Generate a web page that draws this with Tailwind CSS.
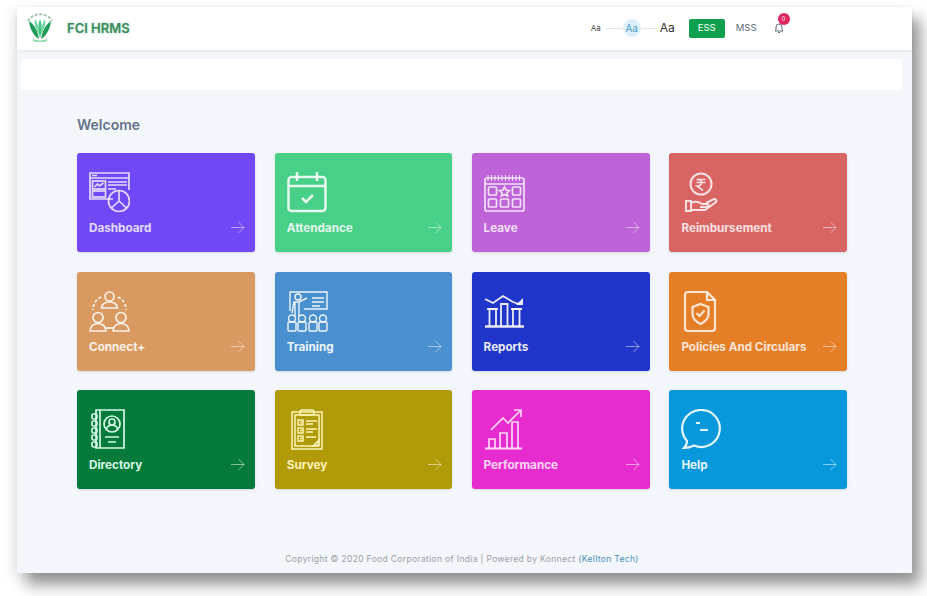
<!DOCTYPE html>
<html lang="en">
<head>
<meta charset="utf-8">
<title>FCI HRMS</title>
<script src="https://cdn.jsdelivr.net/npm/@tailwindcss/browser@4"></script>
</head>
<body class="bg-white font-['Inter',sans-serif] overflow-hidden">
<div class="w-[927px] h-[596px] pt-[7px] pl-[17px]">
  <div class="w-[895px] h-[566px] bg-[#f3f6fa] flex flex-col shadow-[9px_12px_14px_rgba(0,0,0,0.4),-6px_4px_12px_rgba(0,0,0,0.07)]">
    <header class="h-[43px] shrink-0 bg-white shadow-[0_1px_4px_rgba(0,0,0,0.08)] flex items-center">
      <svg class="ml-[8px] w-[30px] h-[32px] -mt-[5px]" viewBox="0 0 30 32" fill="none">
        <path d="M3 11a14 14 0 0 1 24 0" stroke="#a9c9b2" stroke-width="2" stroke-dasharray="3 1.500"/>
        <path d="M4 11c1 9 5 15 10 18-1-7-4-14-10-18z" fill="#1f9a58"/>
        <path d="M26 11c-1 9-5 15-10 18 1-7 4-14 10-18z" fill="#1f9a58"/>
        <path d="M15 9c-2 5-2 12 0 19 2-7 2-14 0-19z" fill="#3cc37a"/>
        <path d="M10 9c-1 5 1 11 4 15 0-5-1-11-4-15zM20 9c1 5-1 11-4 15 0-5 1-11 4-15z" fill="#6ad99b"/>
        <path d="M8 30c5 2 9 2 14 0" stroke="#8fdcae" stroke-width="2"/>
      </svg>
      <span class="ml-[12px] text-[13px] leading-none font-semibold text-[#3f8a60] [text-shadow:0_0_2px_rgba(64,190,110,0.6)] -mt-[1px]">FCI HRMS</span>
      <div class="ml-[461px] flex items-center -mt-[1px]">
        <span class="text-[8px] text-[#444]">Aa</span>
        <span class="ml-[5px] w-[17px] h-px bg-[#e3e6ea]"></span>
        <span class="w-[18px] h-[18px] rounded-full bg-[#e0f0fa] text-[10px] text-[#4a9cc4] flex items-center justify-center">Aa</span>
        <span class="w-[16px] h-px bg-[#e3e6ea]"></span>
        <span class="ml-[3px] text-[12px] text-[#333]">Aa</span>
        <span class="ml-[14px] w-[36px] h-[19px] rounded-[2px] bg-[#0fa04f] text-[9.5px] text-white flex items-center justify-center">ESS</span>
        <span class="ml-[11px] text-[9.5px] text-[#5d6b78]">MSS</span>
        <div class="relative ml-[17px] w-[10px] h-[12px]">
          <svg class="w-[10px] h-[12px]" viewBox="0 0 10 12" fill="none" stroke="#5d6b78" stroke-width="1"><path d="M2 8V5a3 3 0 0 1 6 0v3l1 1H1z"/><path d="M4 10.500h2"/></svg>
          <span class="absolute -top-[9px] left-[4px] w-[12px] h-[12px] rounded-full bg-[#e0275f] text-[5.5px] text-white flex items-center justify-center">0</span>
        </div>
      </div>
    </header>
    <div class="mt-[9px] ml-[4px] w-[881px] h-[31px] shrink-0 bg-white"></div>
    <main class="pl-[60px] pt-[26px] flex-1 flex flex-col">
      <h1 class="text-[14px] leading-[17px] font-semibold text-[#64748b]">Welcome</h1>
      <div class="mt-[20px] grid grid-cols-[178px_177px_178px_177.5px] gap-x-[19.8px] gap-y-[19.5px]">

        <a class="relative h-[99px] rounded-[3px] bg-[#7148f5] text-white/80 shadow-sm block">
          <svg class="absolute left-[12px] top-[19px] w-[41px] h-[41px]" viewBox="0 0 41 41" fill="none" stroke="currentColor" stroke-width="1.700"><path d="M24 27H1V1h39v17"/><path d="M1 6h39M3 3.500h5" /><rect x="3.500" y="9" width="13" height="8"/><path d="M5.500 15l3-3 2 2 4-3"/><rect x="3.500" y="19" width="13" height="6"/><path d="M19 10h19M19 13h19M19 17h8"/><circle cx="30" cy="29" r="10.500"/><path d="M30 18.500V29l-7.500 7M30 29l7.500 7"/></svg>
          <span class="absolute left-[12px] top-[67px] text-[11.7px] leading-[16px] font-bold">Dashboard</span>
          <svg class="absolute right-[10px] top-[68px] w-[14px] h-[13px] text-white/50" viewBox="0 0 14 13" fill="none" stroke="currentColor" stroke-width="1"><path d="M0 6.500h13M7.500 1l5.500 5.500L7.500 12"/></svg>
        </a>

        <a class="relative h-[99px] rounded-[3px] bg-[#48cf88] text-white/85 shadow-sm block">
          <svg class="absolute left-[12px] top-[19px] w-[41px] h-[41px]" viewBox="0 0 41 41" fill="none" stroke="currentColor" stroke-width="2.500"><rect x="1.500" y="5" width="37" height="34" rx="3"/><path d="M1.500 14h37M10 0v9M30 0v9"/><path d="M15 26l4 4 7-7"/></svg>
          <span class="absolute left-[12px] top-[67px] text-[11.7px] leading-[16px] font-bold">Attendance</span>
          <svg class="absolute right-[10px] top-[68px] w-[14px] h-[13px] text-white/50" viewBox="0 0 14 13" fill="none" stroke="currentColor" stroke-width="1"><path d="M0 6.500h13M7.500 1l5.500 5.500L7.500 12"/></svg>
        </a>

        <a class="relative h-[99px] rounded-[3px] bg-[#bf63d9] text-white/80 shadow-sm block">
          <svg class="absolute left-[12px] top-[19px] w-[41px] h-[41px]" viewBox="0 0 41 41" fill="none" stroke="currentColor" stroke-width="1.700"><rect x="1" y="6" width="39" height="33" rx="2"/><path d="M1 12h39"/><path d="M4 3v6M7.500 3v6M11 3v6M14.500 3v6M18 3v6M21.500 3v6M25 3v6M28.500 3v6M32 3v6M35.500 3v6" stroke-width="1"/><rect x="4.500" y="15" width="8" height="8" rx="1"/><path d="M20.500 15l1.500 3 3.500.5-2.500 2.300.6 3.200-3.100-1.600-3.100 1.600.6-3.200-2.500-2.300 3.500-.5z"/><rect x="28.500" y="15" width="8" height="8" rx="1"/><rect x="4.500" y="27" width="8" height="8" rx="1"/><rect x="16.500" y="27" width="8" height="8" rx="1"/><rect x="28.500" y="27" width="8" height="8" rx="1"/></svg>
          <span class="absolute left-[12px] top-[67px] text-[11.7px] leading-[16px] font-bold">Leave</span>
          <svg class="absolute right-[10px] top-[68px] w-[14px] h-[13px] text-white/50" viewBox="0 0 14 13" fill="none" stroke="currentColor" stroke-width="1"><path d="M0 6.500h13M7.500 1l5.500 5.500L7.500 12"/></svg>
        </a>

        <a class="relative h-[99px] rounded-[3px] bg-[#d96464] text-white/80 shadow-sm block">
          <svg class="absolute left-[12px] top-[19px] w-[41px] h-[41px]" viewBox="0 0 41 41" fill="none" stroke="currentColor" stroke-width="2"><circle cx="20" cy="12" r="10.500"/><path d="M15.500 7.500h9M15.500 10.500h9M16 7.500c6 0 6 6.500 0 6.500l6 4.500" stroke-width="1.600"/><path d="M5 29h5v10H5zM10 31c4-2 8-1 11 1h5c2 0 2 3-1 3h-6M10 38h14l11-8c1-2 0-3-2-3l-8 4"/></svg>
          <span class="absolute left-[12px] top-[67px] text-[11.7px] leading-[16px] font-bold">Reimbursement</span>
          <svg class="absolute right-[10px] top-[68px] w-[14px] h-[13px] text-white/50" viewBox="0 0 14 13" fill="none" stroke="currentColor" stroke-width="1"><path d="M0 6.500h13M7.500 1l5.500 5.500L7.500 12"/></svg>
        </a>

        <a class="relative h-[99px] rounded-[3px] bg-[#d99a62] text-white/85 shadow-sm block">
          <svg class="absolute left-[12px] top-[19px] w-[41px] h-[41px]" viewBox="0 0 41 41" fill="none" stroke="currentColor" stroke-width="1.700"><circle cx="20.500" cy="5.500" r="4.500"/><path d="M12.500 17c0-8 16-8 16 0z"/><circle cx="9" cy="26.500" r="5"/><path d="M1 40c0-10 16-10 16 0z"/><circle cx="32" cy="26.500" r="5"/><path d="M24 40c0-10 16-10 16 0z"/><path d="M12 6C6 9 4 14 4 19M29 6c6 3 8 8 8 13" stroke-dasharray="3 2"/><path d="M17 37h7" /></svg>
          <span class="absolute left-[12px] top-[67px] text-[11.7px] leading-[16px] font-bold">Connect+</span>
          <svg class="absolute right-[10px] top-[68px] w-[14px] h-[13px] text-white/50" viewBox="0 0 14 13" fill="none" stroke="currentColor" stroke-width="1"><path d="M0 6.500h13M7.500 1l5.500 5.500L7.500 12"/></svg>
        </a>

        <a class="relative h-[99px] rounded-[3px] bg-[#4a90cf] text-white/90 shadow-sm block">
          <svg class="absolute left-[12px] top-[19px] w-[41px] h-[41px]" viewBox="0 0 41 41" fill="none" stroke="currentColor" stroke-width="1.400"><path d="M3 20V1h37v17H17"/><circle cx="11" cy="6" r="3"/><path d="M5 22l2-11h5l8-4M12 11v14M8 12v13"/><path d="M25 7h12M25 11h12M25 15h8"/><rect x="1" y="31" width="8" height="9" rx="1"/><rect x="11" y="31" width="8" height="9" rx="1"/><rect x="22" y="31" width="8" height="9" rx="1"/><rect x="32" y="31" width="8" height="9" rx="1"/><circle cx="5" cy="27.500" r="3.500"/><circle cx="15" cy="27.500" r="3.500"/><circle cx="26" cy="27.500" r="3.500"/><circle cx="36" cy="27.500" r="3.500"/></svg>
          <span class="absolute left-[12px] top-[67px] text-[11.7px] leading-[16px] font-bold">Training</span>
          <svg class="absolute right-[10px] top-[68px] w-[14px] h-[13px] text-white/50" viewBox="0 0 14 13" fill="none" stroke="currentColor" stroke-width="1"><path d="M0 6.500h13M7.500 1l5.500 5.500L7.500 12"/></svg>
        </a>

        <a class="relative h-[99px] rounded-[3px] bg-[#2035c9] text-white/90 shadow-sm block">
          <svg class="absolute left-[12px] top-[19px] w-[41px] h-[41px]" viewBox="0 0 41 41" fill="none" stroke="currentColor" stroke-width="1.800"><path d="M1 8l8 4 10-7 10 6 6 2"/><path d="M39 7v7h-7z" fill="currentColor" stroke="none"/><path d="M1 35.500h39" stroke-width="2.400"/><path d="M5.500 35V18h6.500v17M17 35V13h6.500v22M29 35V18h6.500v17"/><path d="M3 18h11M27 18h11"/></svg>
          <span class="absolute left-[12px] top-[67px] text-[11.7px] leading-[16px] font-bold">Reports</span>
          <svg class="absolute right-[10px] top-[68px] w-[14px] h-[13px] text-white/50" viewBox="0 0 14 13" fill="none" stroke="currentColor" stroke-width="1"><path d="M0 6.500h13M7.500 1l5.500 5.500L7.500 12"/></svg>
        </a>

        <a class="relative h-[99px] rounded-[3px] bg-[#e47e27] text-white/80 shadow-sm block">
          <svg class="absolute left-[12px] top-[19px] w-[41px] h-[41px]" viewBox="0 0 41 41" fill="none" stroke="currentColor" stroke-width="2.200"><path d="M7 1h19l8 8v28a3 3 0 0 1-3 3H7a3 3 0 0 1-3-3V4a3 3 0 0 1 3-3z"/><path d="M26 1v8h8"/><path d="M19.500 13l8 3v7c0 5-4 8-8 10-4-2-8-5-8-10v-7z"/><path d="M15.500 22l3 3 5-5.500"/></svg>
          <span class="absolute left-[12px] top-[67px] text-[11.7px] leading-[16px] font-bold">Policies And Circulars</span>
          <svg class="absolute right-[10px] top-[68px] w-[14px] h-[13px] text-white/50" viewBox="0 0 14 13" fill="none" stroke="currentColor" stroke-width="1"><path d="M0 6.500h13M7.500 1l5.500 5.500L7.500 12"/></svg>
        </a>

        <a class="relative h-[99px] rounded-[3px] bg-[#067a3b] text-[#d4f7e3] shadow-sm block">
          <svg class="absolute left-[12px] top-[19px] w-[41px] h-[41px]" viewBox="0 0 41 41" fill="none" stroke="currentColor" stroke-width="1.700"><path d="M7 1h28v38H7z"/><path d="M11 1v38"/><rect x="3" y="5" width="5" height="5" rx="1.500"/><rect x="3" y="12" width="5" height="5" rx="1.500"/><rect x="3" y="19" width="5" height="5" rx="1.500"/><rect x="3" y="26" width="5" height="5" rx="1.500"/><rect x="3" y="33" width="5" height="5" rx="1.500"/><circle cx="23" cy="15" r="8"/><circle cx="23" cy="13" r="3"/><path d="M17.500 20c1-5 10-5 11 0"/><path d="M16 28h14M19 33h8"/></svg>
          <span class="absolute left-[12px] top-[67px] text-[11.7px] leading-[16px] font-bold">Directory</span>
          <svg class="absolute right-[10px] top-[68px] w-[14px] h-[13px] text-white/50" viewBox="0 0 14 13" fill="none" stroke="currentColor" stroke-width="1"><path d="M0 6.500h13M7.500 1l5.500 5.500L7.500 12"/></svg>
        </a>

        <a class="relative h-[99px] rounded-[3px] bg-[#b19a07] text-[#fdf3b8] shadow-sm block">
          <svg class="absolute left-[12px] top-[19px] w-[41px] h-[41px]" viewBox="0 0 41 41" fill="none" stroke="currentColor" stroke-width="1.500"><path d="M5 3h30v37H5z"/><path d="M8 6h24v31H8z"/><rect x="13" y="1" width="14" height="5" rx="2"/><path d="M11 11h5v5h-5zM11 19h5v5h-5zM11 27h5v5h-5z"/><path d="M13 14l2-1M13 22l2-1M13 30l2-1"/><path d="M19 12h11M19 15h7M19 20h11M19 23h7M19 28h10"/><path d="M26 37l6-6-1 5z"/></svg>
          <span class="absolute left-[12px] top-[67px] text-[11.7px] leading-[16px] font-bold">Survey</span>
          <svg class="absolute right-[10px] top-[68px] w-[14px] h-[13px] text-white/50" viewBox="0 0 14 13" fill="none" stroke="currentColor" stroke-width="1"><path d="M0 6.500h13M7.500 1l5.500 5.500L7.500 12"/></svg>
        </a>

        <a class="relative h-[99px] rounded-[3px] bg-[#e72ccf] text-white/80 shadow-sm block">
          <svg class="absolute left-[12px] top-[19px] w-[41px] h-[41px]" viewBox="0 0 41 41" fill="none" stroke="currentColor" stroke-width="1.700"><path d="M1 39.500h37" stroke-width="2"/><path d="M5 39V30h6v9M16 39V24h7v15M28 39V13h6v26"/><path d="M7 21L19 9l5 5L36 2"/><path d="M30 1h7v7" /></svg>
          <span class="absolute left-[12px] top-[67px] text-[11.7px] leading-[16px] font-bold">Performance</span>
          <svg class="absolute right-[10px] top-[68px] w-[14px] h-[13px] text-white/50" viewBox="0 0 14 13" fill="none" stroke="currentColor" stroke-width="1"><path d="M0 6.500h13M7.500 1l5.500 5.500L7.500 12"/></svg>
        </a>

        <a class="relative h-[99px] rounded-[3px] bg-[#0798dc] text-white/90 shadow-sm block">
          <svg class="absolute left-[12px] top-[19px] w-[41px] h-[41px]" viewBox="0 0 41 41" fill="none" stroke="currentColor" stroke-width="2.200"><path d="M20 1a18.500 18.500 0 1 1-7 35.500C10 38 6 39 3 39c2-2 3-4 3-7A18.500 18.500 0 0 1 20 1z"/><path d="M15 14h4M19 21h8" /></svg>
          <span class="absolute left-[12px] top-[67px] text-[11.7px] leading-[16px] font-bold">Help</span>
          <svg class="absolute right-[10px] top-[68px] w-[14px] h-[13px] text-white/50" viewBox="0 0 14 13" fill="none" stroke="currentColor" stroke-width="1"><path d="M0 6.500h13M7.500 1l5.500 5.500L7.500 12"/></svg>
        </a>
      </div>
      <footer class="mt-auto pb-[8px] -ml-[60px] pr-[5px] text-center text-[8.5px] leading-[12px] tracking-[0.34px] text-[#9aa1a8]">Copyright © 2020 Food Corporation of India | Powered by Konnect <span class="text-[#4a90b8]">(Kellton Tech)</span></footer>
    </main>
  </div>
</div>
</body>
</html>
